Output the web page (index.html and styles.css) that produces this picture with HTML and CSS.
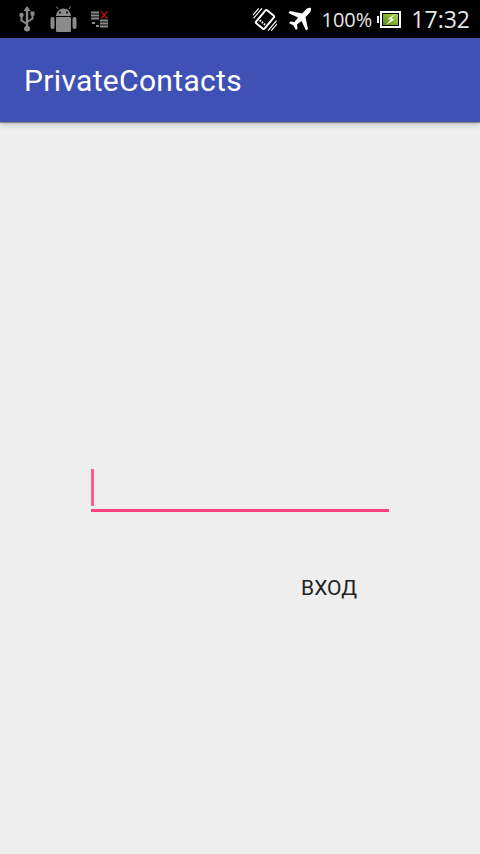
FILE: index.html
```html
<!DOCTYPE html>
<html lang="en">
<head>
    <meta charset="UTF-8">
    <meta name="viewport" content="width=device-width, initial-scale=1.0">
    <title>PrivateContacts</title>
    <link rel="stylesheet" href="styles.css">
</head>
<body>
    <div class="status-bar">
        <div class="status-left">
            <!-- usb -->
            <svg class="icon-usb" width="18" height="28" viewBox="0 0 18 28">
                <path d="M9 1 L12.5 6 L10.2 6 L10.2 21 A3 3 0 1 1 7.8 21 L7.8 6 L5.5 6 Z" fill="#8a8a8a"/>
                <path d="M9 19 L3.5 15.5 L3.5 11" fill="none" stroke="#8a8a8a" stroke-width="2"/>
                <path d="M9 17 L14.5 13.5 L14.5 10" fill="none" stroke="#8a8a8a" stroke-width="2"/>
                <circle cx="3.5" cy="10" r="2.2" fill="#8a8a8a"/>
                <rect x="12.5" y="6.5" width="4" height="4" fill="#8a8a8a"/>
            </svg>
            <!-- android -->
            <svg class="icon-android" width="27" height="27" viewBox="0 0 27 27">
                <path d="M6 10 A7.5 7.5 0 0 1 21 10 Z" fill="#8a8a8a"/>
                <path d="M8 3 L6.5 0.5 M19 3 L20.5 0.5" stroke="#8a8a8a" stroke-width="1"/>
                <circle cx="10" cy="6.5" r="1" fill="#000"/>
                <circle cx="17" cy="6.5" r="1" fill="#000"/>
                <rect x="6" y="11" width="15" height="15" rx="1" fill="#8a8a8a"/>
                <rect x="0.5" y="11" width="4" height="12" rx="2" fill="#8a8a8a"/>
                <rect x="22.5" y="11" width="4" height="12" rx="2" fill="#8a8a8a"/>
            </svg>
            <!-- debug list -->
            <svg class="icon-list" width="18" height="17" viewBox="0 0 18 17">
                <path d="M0 1.5 H8 M0 4.5 H8 M0 7.5 H8 M9 9.5 H17 M9 12.5 H17 M9 15.5 H17" stroke="#8a8a8a" stroke-width="2"/>
                <rect x="1" y="11" width="3" height="2" fill="#8a8a8a"/>
                <rect x="5" y="14" width="3" height="2" fill="#8a8a8a"/>
                <path d="M10 0.5 L16.5 7.5 M16.5 0.5 L10 7.5" stroke="#a01018" stroke-width="1.8"/>
            </svg>
        </div>
        <div class="status-right">
            <!-- rotate / vibrate -->
            <svg class="icon-rotate" width="24" height="24" viewBox="0 0 24 24">
                <g transform="rotate(40 12 12.5)">
                    <rect x="6.5" y="4" width="11" height="17" rx="1.5" fill="none" stroke="#fff" stroke-width="2"/>
                    <path d="M8.5 16.5 H10 M11.3 16.5 H12.8 M14 16.5 H15.5" stroke="#fff" stroke-width="2"/>
                    <path d="M2.5 6 V19 M0 8 V17 M21.5 6 V19 M24 8 V17" stroke="#fff" stroke-width="1.2"/>
                </g>
            </svg>
            <!-- airplane -->
            <svg class="icon-plane" width="24" height="24" viewBox="0 0 24 24">
                <path d="M23 1 C21 0.5 19 1.5 17.5 3 L14 6.5 L2 4 L0.5 6 L10 10.5 L6.5 15 L2.5 14.5 L1 16 L5.5 18.5 L8 23 L9.5 21.5 L9 17.5 L13.5 14 L18 23.5 L20 22 L17.5 10 L21 6.5 C22.5 5 23.5 3 23 1 Z" fill="#fff"/>
            </svg>
            <span class="battery-text">100%</span>
            <!-- battery charging -->
            <svg class="icon-battery" width="24" height="17" viewBox="0 0 24 17">
                <defs>
                    <linearGradient id="charge" x1="0" y1="1" x2="1" y2="0">
                        <stop offset="0" stop-color="#5d8a1c"/>
                        <stop offset="1" stop-color="#a8d848"/>
                    </linearGradient>
                </defs>
                <rect x="0" y="5" width="2" height="7" fill="#fff"/>
                <rect x="4" y="1" width="19" height="15" fill="#000" stroke="#fff" stroke-width="2"/>
                <rect x="6" y="3" width="15" height="11" fill="url(#charge)"/>
                <path d="M18 3 L11 8 L14 8.5 L9 14 L17.5 8.5 L14.5 7.5 Z" fill="#fff"/>
            </svg>
            <span class="clock">17:32</span>
        </div>
    </div>
    <div class="app-bar">
        <h1 class="app-title">PrivateContacts</h1>
    </div>
    <div class="content">
        <div class="login-form">
            <div class="input-field"><span class="cursor"></span></div>
            <div class="actions">
                <button class="login-btn">Вход</button>
            </div>
        </div>
    </div>
</body>
</html>
```

FILE: styles.css
```css
html, body {
    height: 100%;
}
body {
    margin: 0;
    height: 854px;
    overflow: hidden;
    display: flex;
    flex-direction: column;
    background-color: #eeeeee;
    font-family: Roboto, sans-serif;
}
.status-bar {
    height: 38px;
    flex: none;
    background-color: #000;
    display: flex;
    justify-content: space-between;
    align-items: center;
}
.status-left {
    display: flex;
    align-items: center;
    padding-left: 18px;
}
.icon-usb {
    margin-right: 14px;
}
.icon-android {
    margin-right: 14px;
}
.status-right {
    display: flex;
    align-items: center;
    padding-right: 10px;
}
.icon-rotate {
    margin-right: 11px;
}
.icon-plane {
    margin-right: 10px;
}
.battery-text {
    font-family: "Open Sans", sans-serif;
    font-size: 20px;
    color: #e6e6e6;
    margin-right: 5px;
}
.icon-battery {
    margin-right: 10px;
}
.clock {
    font-family: "Open Sans", sans-serif;
    font-size: 23px;
    color: #e6e6e6;
}
.app-bar {
    height: 84px;
    flex: none;
    background-color: #3f51b5;
    box-shadow: 0 1px 1px rgba(0, 0, 0, 0.35), 0 2px 7px rgba(0, 0, 0, 0.2);
    display: flex;
    align-items: center;
    padding-left: 24px;
}
.app-title {
    margin: 0;
    font-size: 30px;
    font-weight: 400;
    letter-spacing: 0.33px;
    color: #fff;
}
.content {
    flex: 1;
    padding: 347px 91px 0;
}
.login-form {
    width: 298px;
}
.input-field {
    height: 37px;
    padding-bottom: 3px;
    border-bottom: 3px solid #ff4081;
}
.cursor {
    display: block;
    width: 3px;
    height: 37px;
    background-color: #ff5a92;
}
.actions {
    display: flex;
    justify-content: flex-end;
    margin-top: 61px;
}
.login-btn {
    border: none;
    background: none;
    padding: 0;
    margin-right: 32px;
    font-family: Roboto, sans-serif;
    font-size: 21px;
    line-height: 30px;
    text-transform: uppercase;
    color: #212121;
}
```
